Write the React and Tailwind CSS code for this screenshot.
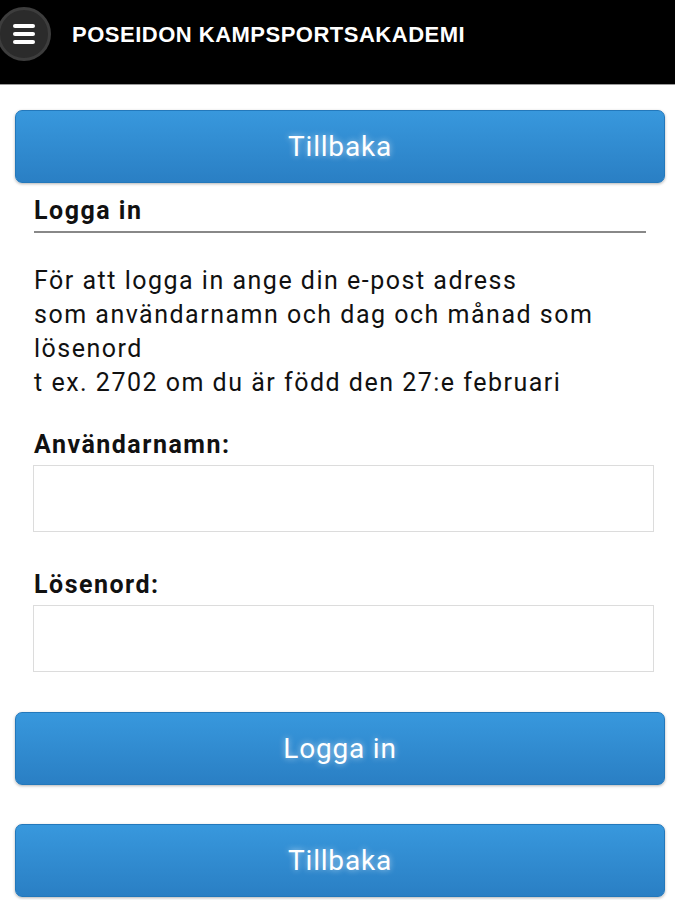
export default function App() {
  const btn =
    "w-full h-[73px] rounded-[7px] bg-gradient-to-b from-[#3898dd] to-[#2a7fc4] border border-[#2378bb] text-white text-[28px] tracking-[0.8px] [text-shadow:0_0_6px_rgba(255,255,255,0.6)] shadow-[0_1px_3px_rgba(0,0,0,0.3)]";

  return (
    <div className="w-[675px] h-[900px] bg-white overflow-hidden font-['Roboto',sans-serif]">
      <div className="h-[85px] bg-black border-b border-[#9a9a9a] flex items-start">
        <div className="mt-[7px] -ml-[3px] w-[54px] h-[54px] shrink-0 rounded-full bg-[#2b2b2b] border-[3px] border-[#3d3d3d] flex items-center justify-center">
          <svg width="22" height="20" viewBox="0 0 22 20">
            <rect x="0" y="0" width="22" height="4" rx="2" fill="white" />
            <rect x="0" y="8" width="22" height="4" rx="2" fill="white" />
            <rect x="0" y="16" width="22" height="4" rx="2" fill="white" />
          </svg>
        </div>
        <div className="ml-[21px] mt-[22px] leading-[26px] text-white font-bold text-[22px] tracking-[0.5px] font-['Liberation_Sans',sans-serif]">
          POSEIDON KAMPSPORTSAKADEMI
        </div>
      </div>

      <div className="pl-[15px] pr-[10px] pt-[25px]">
        <button className={btn}>Tillbaka</button>

        <div className="px-[19px] text-[#111] tracking-[1.5px]">
          <h2 className="mt-[14px] text-[25px] leading-[28px] font-bold pb-[6px] border-b-2 border-[#888]">
            Logga in
          </h2>

          <p className="mt-[31px] text-[25px] leading-[34px]">
            För att logga in ange din e-post adress
            <br />
            som användarnamn och dag och månad som lösenord
            <br />
            t ex. 2702 om du är född den 27:e februari
          </p>

          <label className="block mt-[31px] text-[25px] leading-[28px] font-bold">Användarnamn:</label>
          <input className="block mt-[6px] w-[621px] -ml-[1px] h-[67px] border border-[#dcdcdc] bg-white" />

          <label className="block mt-[39px] text-[25px] leading-[28px] font-bold">Lösenord:</label>
          <input className="block mt-[6px] w-[621px] -ml-[1px] h-[67px] border border-[#dcdcdc] bg-white" />
        </div>

        <button className={`${btn} mt-[40px]`}>Logga in</button>
        <button className={`${btn} mt-[39px]`}>Tillbaka</button>
      </div>
    </div>
  );
}
